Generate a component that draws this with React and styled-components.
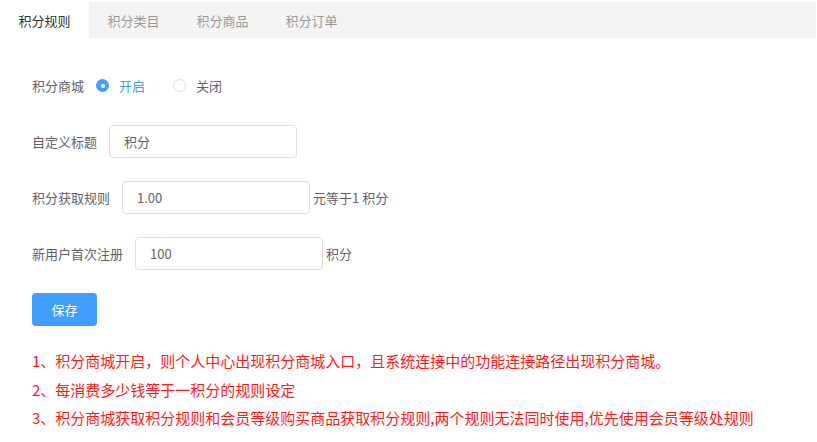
import styled, { createGlobalStyle } from "styled-components";

const GlobalStyle = createGlobalStyle`
  body {
    margin: 0;
    background: #ffffff;
    font-family: "Noto Sans CJK SC", "Liberation Sans", sans-serif;
  }
`;

const Page = styled.div`
  width: 817px;
  padding-top: 2px;
`;

const TabBar = styled.div`
  display: flex;
  height: 36px;
  margin-right: 1px;
  background: #f4f4f4;
`;

const Tab = styled.div`
  width: 89px;
  display: flex;
  align-items: center;
  justify-content: center;
  font-size: 13px;
  color: ${(props) => (props.active ? "#303133" : "#999999")};
  background: ${(props) => (props.active ? "#ffffff" : "transparent")};
`;

const Form = styled.div`
  padding: 31px 0 0 32px;
  display: flex;
  flex-direction: column;
  gap: 23px;
`;

const Row = styled.div`
  display: flex;
  align-items: center;
  height: 33px;
`;

const Label = styled.span`
  font-size: 13px;
  color: #606266;
  margin-right: 12px;
`;

const RadioItem = styled.label`
  display: flex;
  align-items: center;
  margin-right: 28px;
  font-size: 13px;
  color: ${(props) => (props.checked ? "#409eff" : "#606266")};
`;

const RadioDot = styled.span`
  width: 13px;
  height: 13px;
  box-sizing: border-box;
  border-radius: 50%;
  margin-right: 10px;
  display: flex;
  align-items: center;
  justify-content: center;
  border: 1px solid ${(props) => (props.checked ? "#409eff" : "#dcdfe6")};
  background: ${(props) => (props.checked ? "#409eff" : "#ffffff")};

  &::after {
    content: "";
    width: 4px;
    height: 4px;
    border-radius: 50%;
    background: #ffffff;
    display: ${(props) => (props.checked ? "block" : "none")};
  }
`;

const Input = styled.div`
  width: 188px;
  height: 33px;
  box-sizing: border-box;
  border: 1px solid #dcdfe6;
  border-radius: 4px;
  padding: 0 14px;
  display: flex;
  align-items: center;
  font-size: 13px;
  color: #606266;
`;

const Suffix = styled.span`
  font-size: 13px;
  color: #606266;
  margin-left: 3px;
`;

const SaveButton = styled.button`
  width: 65px;
  height: 33px;
  border: none;
  border-radius: 4px;
  background: #409eff;
  color: #ffffff;
  font-family: inherit;
  font-size: 13px;
  padding: 0;
`;

const Notes = styled.div`
  margin: 21px 0 0 32px;
  color: #ff1a1a;
  font-size: 15px;
  line-height: 28.5px;
`;

const tabs = ["积分规则", "积分类目", "积分商品", "积分订单"];

const notes = [
  "1、积分商城开启，则个人中心出现积分商城入口，且系统连接中的功能连接路径出现积分商城。",
  "2、每消费多少钱等于一积分的规则设定",
  "3、积分商城获取积分规则和会员等级购买商品获取积分规则,两个规则无法同时使用,优先使用会员等级处规则",
];

export default function App() {
  return (
    <Page>
      <GlobalStyle />
      <TabBar>
        {tabs.map((t, i) => (
          <Tab key={t} active={i === 0}>
            {t}
          </Tab>
        ))}
      </TabBar>
      <Form>
        <Row>
          <Label>积分商城</Label>
          <RadioItem checked>
            <RadioDot checked />
            开启
          </RadioItem>
          <RadioItem>
            <RadioDot />
            关闭
          </RadioItem>
        </Row>
        <Row>
          <Label>自定义标题</Label>
          <Input>积分</Input>
        </Row>
        <Row>
          <Label>积分获取规则</Label>
          <Input>1.00</Input>
          <Suffix>元等于1 积分</Suffix>
        </Row>
        <Row>
          <Label>新用户首次注册</Label>
          <Input>100</Input>
          <Suffix>积分</Suffix>
        </Row>
        <Row>
          <SaveButton>保存</SaveButton>
        </Row>
      </Form>
      <Notes>
        {notes.map((n) => (
          <div key={n}>{n}</div>
        ))}
      </Notes>
    </Page>
  );
}
